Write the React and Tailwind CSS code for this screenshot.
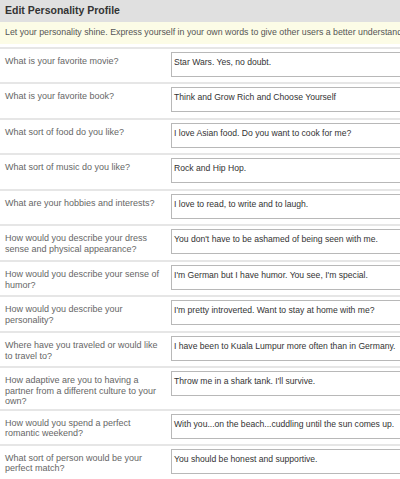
const rows = [
	{ q: ['What is your favorite movie?'], a: 'Star Wars. Yes, no doubt.' },
	{ q: ['What is your favorite book?'], a: 'Think and Grow Rich and Choose Yourself' },
	{ q: ['What sort of food do you like?'], a: 'I love Asian food. Do you want to cook for me?' },
	{ q: ['What sort of music do you like?'], a: 'Rock and Hip Hop.' },
	{ q: ['What are your hobbies and interests?'], a: 'I love to read, to write and to laugh.' },
	{ q: ['How would you describe your dress', 'sense and physical appearance?'], a: "You don't have to be ashamed of being seen with me." },
	{ q: ['How would you describe your sense of', 'humor?'], a: "I'm German but I have humor. You see, I'm special." },
	{ q: ['How would you describe your', 'personality?'], a: "I'm pretty introverted. Want to stay at home with me?" },
	{ q: ['Where have you traveled or would like', 'to travel to?'], a: 'I have been to Kuala Lumpur more often than in Germany.' },
	{ q: ['How adaptive are you to having a', 'partner from a different culture to your', 'own?'], a: "Throw me in a shark tank. I'll survive." },
	{ q: ['How would you spend a perfect', 'romantic weekend?'], a: 'With you...on the beach...cuddling until the sun comes up.' },
	{ q: ['What sort of person would be your', 'perfect match?'], a: 'You should be honest and supportive.' },
]

const Row = ({ q, a, tall }) => (
	<div className={tall ? 'flex items-start border-t-2 border-[#e6e6e6] pt-[3px] pb-[2px]' : 'flex items-start border-t-2 border-[#e6e6e6] pt-[3px] pb-[1px]'}>
		<div className="w-[171px] shrink-0 pl-[5px] pt-[4px] text-[9px] leading-[10.5px] text-[#666]">
			{q.map((line, i) => (
				<div key={i} className="whitespace-nowrap">{line}</div>
			))}
		</div>
		<div className="mb-[4px] h-[25px] w-[250px] shrink-0 border border-[#b8b8b8] bg-white px-[2px] pt-[4px] text-[8.6px] leading-[11px] text-[#333] whitespace-nowrap">
			{a}
		</div>
	</div>
)

export default function App() {
	return (
		<div className="h-[479px] w-[400px] overflow-hidden bg-white font-['Liberation_Sans',Arial,sans-serif]">
			<div className="flex h-[22px] items-center bg-[#e0e0e0] pl-[5px] text-[10.5px] font-bold text-[#333]">
				Edit Personality Profile
			</div>
			<div className="mb-[3px] flex h-[22px] items-center overflow-hidden whitespace-nowrap bg-[#fcfce6] pl-[5px] text-[8.8px] text-[#555]">
				Let your personality shine. Express yourself in your own words to give other users a better understanding.
			</div>
			{rows.map((r, i) => (
				<Row key={i} tall={i % 2 === 1} {...r} />
			))}
		</div>
	)
}
